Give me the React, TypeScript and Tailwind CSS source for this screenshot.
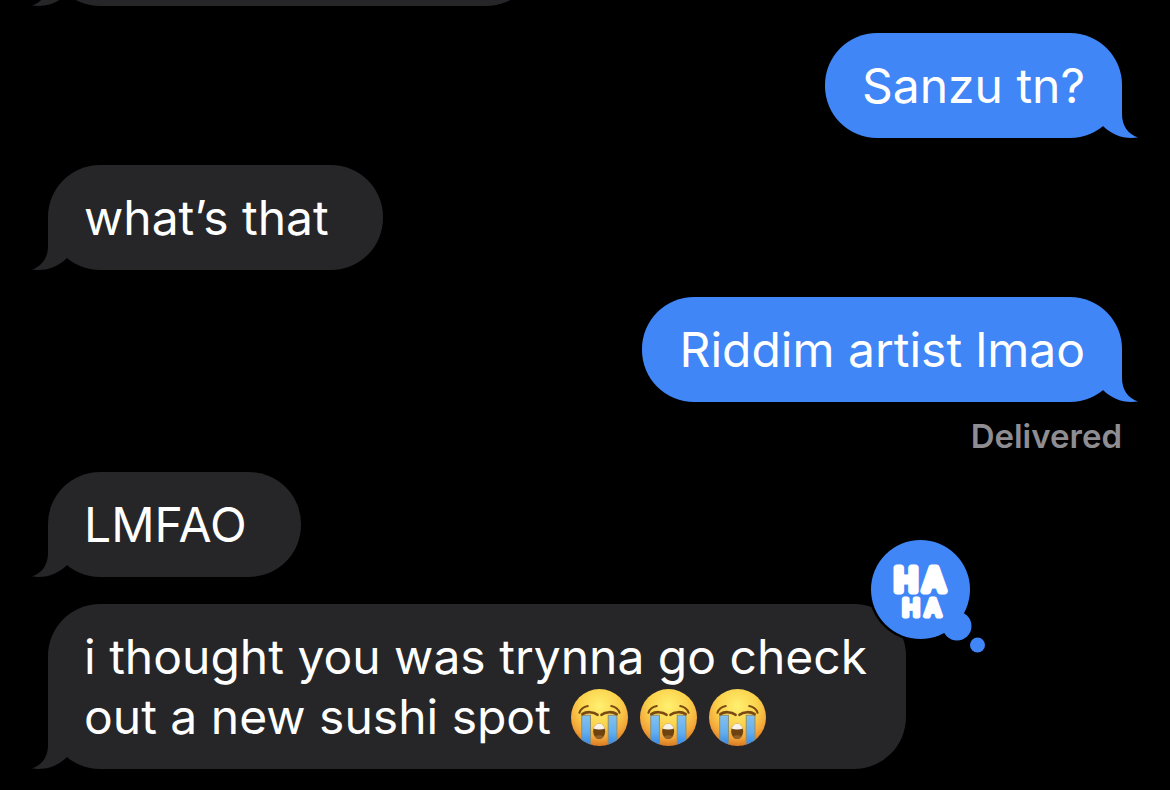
import type { ReactNode } from 'react';
import clsx from 'clsx';

interface BubbleProps {
  from: 'me' | 'them';
  className?: string;
  children?: ReactNode;
}

function Tail({ from }: { from: 'me' | 'them' }) {
  return (
    <svg
      viewBox="0 0 40 52"
      aria-hidden="true"
      className={clsx(
        'absolute bottom-0 h-[52px] w-10',
        from === 'me' ? '-right-4 -scale-x-100 fill-[#4086f7]' : '-left-4 fill-[#262628]'
      )}
    >
      <path d="M16 0V28C16 40 10 48 0 51.5C14 53.5 26 49 35 40L40 30Z" />
    </svg>
  );
}

function Bubble({ from, className, children }: BubbleProps) {
  return (
    <div
      className={clsx(
        'relative min-h-[105px] rounded-[52px] pt-[23px] pb-[22px] text-5xl leading-[60px] text-white',
        from === 'me' ? 'self-end bg-[#4086f7] px-[37px]' : 'self-start bg-[#262628] pl-9',
        className
      )}
    >
      <Tail from={from} />
      {children}
    </div>
  );
}

function EmojiDefs() {
  return (
    <svg aria-hidden="true" className="absolute h-0 w-0">
      <defs>
        <radialGradient id="face" cx="0.5" cy="0.3" r="0.7">
          <stop offset="0" stopColor="#fff070" />
          <stop offset="0.5" stopColor="#fbd24c" />
          <stop offset="0.8" stopColor="#f3a63a" />
          <stop offset="1" stopColor="#d97a24" />
        </radialGradient>
        <linearGradient id="tear" x1="0" y1="0" x2="0" y2="1">
          <stop offset="0" stopColor="#83c1ee" />
          <stop offset="0.55" stopColor="#62aef0" />
          <stop offset="1" stopColor="#2f83e3" />
        </linearGradient>
        <clipPath id="face-clip">
          <circle cx="85" cy="85" r="85" />
        </clipPath>
        <clipPath id="mouth-clip">
          <ellipse cx="84" cy="126" rx="18" ry="23" />
        </clipPath>
      </defs>
    </svg>
  );
}

function CryingFace() {
  return (
    <svg viewBox="0 0 170 170" role="img" aria-label="Loudly crying face" className="h-[57px] w-[57px]">
      <circle cx="85" cy="85" r="85" fill="url(#face)" />
      <g clipPath="url(#face-clip)">
        <path d="M32 78H58V172H32ZM111 78H137V172H111Z" fill="url(#tear)" stroke="#8b8f74" strokeWidth="3" />
      </g>
      <g fill="none" stroke="#7a4a12" strokeLinecap="round">
        <path d="M25 71C29 60 38 53 50 51M145 71C141 60 132 53 120 51" strokeWidth="6" />
        <path d="M34 75C45 67 67 67 79 77M136 75C125 67 103 67 91 77" strokeWidth="8" />
      </g>
      <ellipse cx="84" cy="126" rx="18" ry="23" fill="#6f430f" />
      <g clipPath="url(#mouth-clip)">
        <path d="M66 100H102V118Q84 123 66 118Z" fill="#f6f2ea" />
        <ellipse cx="84" cy="148" rx="14" ry="10" fill="#90602a" />
      </g>
    </svg>
  );
}

function HahaReaction() {
  return (
    <svg
      viewBox="0 0 117 115"
      role="img"
      aria-label="Haha reaction"
      className="absolute -top-[65px] -right-[81px] h-[115px] w-[117px]"
    >
      <circle cx="50.5" cy="50.5" r="52" fill="#000" />
      <g fill="#4086f7">
        <circle cx="50.5" cy="50.5" r="49.5" />
        <circle cx="87" cy="87" r="14.5" />
        <circle cx="107.5" cy="106" r="7.5" />
      </g>
      <g
        fill="#fff"
        stroke="#fff"
        strokeLinejoin="round"
        textAnchor="middle"
        className="font-['Inter',sans-serif] font-medium"
      >
        <text x="36 64" y="52" fontSize="31" strokeWidth="7">HA</text>
        <text x="41 63" y="77" fontSize="23" strokeWidth="5">HA</text>
      </g>
    </svg>
  );
}

export default function App() {
  return (
    <main className="flex min-h-screen flex-col overflow-hidden bg-black px-12 pb-[21px] font-['Inter',sans-serif]">
      <EmojiDefs />
      <Bubble from="them" className="-mt-[99px] w-[490px]" />
      <Bubble from="me" className="mt-[27px]">Sanzu tn?</Bubble>
      <Bubble from="them" className="mt-[27px] pr-[54px]">what’s that</Bubble>
      <Bubble from="me" className="mt-[27px]">Riddim artist lmao</Bubble>
      <p className="mt-4 self-end text-[33px] leading-9 font-semibold text-[#8d8d92]">Delivered</p>
      <Bubble from="them" className="mt-[18px] pr-[54px]">LMFAO</Bubble>
      <Bubble from="them" className="mt-[27px] pr-[39px]">
        i thought you was trynna go check
        <div className="flex items-center">
          out a new sushi spot
          <span className="ml-5 flex gap-3">
            <CryingFace />
            <CryingFace />
            <CryingFace />
          </span>
        </div>
        <HahaReaction />
      </Bubble>
    </main>
  );
}
